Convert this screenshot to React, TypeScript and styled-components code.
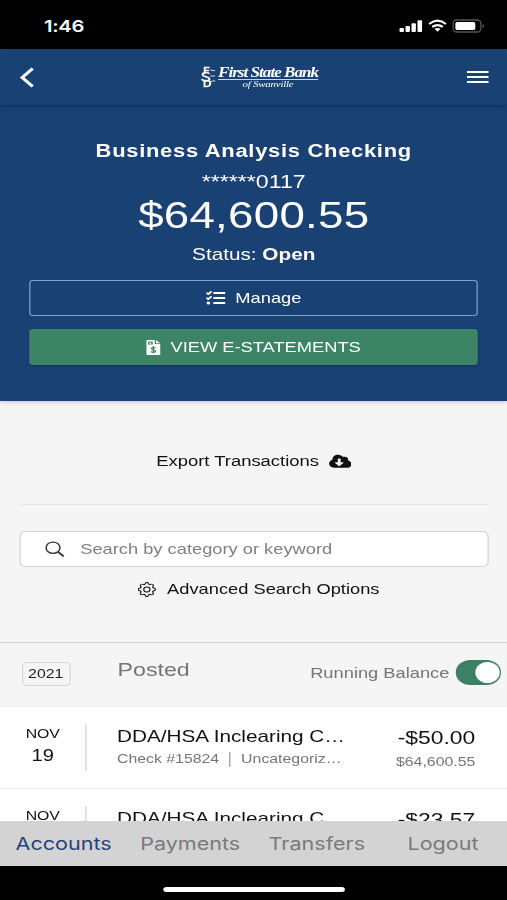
import React from "react";
import styled, { createGlobalStyle } from "styled-components";
import { FaTasks, FaCloudDownloadAlt } from "react-icons/fa";
import { BsGear } from "react-icons/bs";

const Global = createGlobalStyle`
  * { box-sizing: border-box; }
  body { margin: 0; background: #000; font-family: "Liberation Sans", Arial, sans-serif; }
`;

const Viewport = styled.div`
  width: 507px;
  height: 900px;
  overflow: hidden;
`;

/* The screen is laid out 416px wide and stretched to fill the viewport. */
const Screen = styled.div`
  width: 416px;
  height: 900px;
  display: flex;
  flex-direction: column;
  background: #f5f5f5;
  transform: scaleX(1.21875);
  transform-origin: 0 0;
`;

const Text = styled.span<{ $size: number; $ls?: number; $bold?: boolean; $color?: string; $lh?: number }>`
  display: block;
  white-space: nowrap;
  font-size: ${(p) => p.$size}px;
  line-height: ${(p) => p.$lh ?? 20}px;
  letter-spacing: ${(p) => p.$ls ?? 0}px;
  font-weight: ${(p) => (p.$bold ? 700 : 400)};
  color: ${(p) => p.$color ?? "inherit"};
`;

const StatusBar = styled.div`
  flex: none;
  height: 49px;
  padding: 2px 17.2px 0 36px;
  display: flex;
  align-items: center;
  justify-content: space-between;
  background: #000;
  color: #fff;
`;

const Clock = styled.span`
  font: 600 16.5px/20px Inter, sans-serif;
  letter-spacing: -0.2px;
`;

const Header = styled.header`
  flex: none;
  position: relative;
  height: 56px;
  padding: 0 15px 0 16.3px;
  display: flex;
  align-items: center;
  justify-content: space-between;
  background: #1a4173;
  color: #fff;
  box-shadow: 0 1px 4px rgba(0, 15, 50, 0.4);
`;

const Brand = styled.div`
  display: flex;
  align-items: center;
  gap: 2px;
  margin-left: 13.5px;
`;

const BrandWords = styled.div`
  width: 82px;
  padding-top: 1px;
  font-family: "Liberation Serif", serif;
  font-style: italic;
  font-weight: 700;
  text-align: center;
`;

const BrandName = styled.div`
  font-size: 14px;
  line-height: 13px;
  height: 14px;
  letter-spacing: -0.8px;
  white-space: nowrap;
  border-bottom: 1px solid #c9d6e8;
`;

const BrandPlace = styled.div`
  font-size: 9px;
  line-height: 9px;
  height: 9px;
  font-weight: 400;
  letter-spacing: -0.2px;
`;

const Account = styled.section`
  flex: none;
  height: 296px;
  padding: 34px 24px 0 24.4px;
  display: flex;
  flex-direction: column;
  align-items: center;
  background: #1a4173;
  color: #fff;
  box-shadow: 0 1px 4px rgba(0, 0, 0, 0.2);
`;

const Button = styled.button<{ $filled?: boolean }>`
  flex: none;
  width: 100%;
  height: 36px;
  margin: 0 0 13px;
  padding: 0;
  display: flex;
  align-items: center;
  justify-content: center;
  gap: 8px;
  border: 1px solid ${(p) => (p.$filled ? "#3d8467" : "#7da3c4")};
  border-radius: 3px;
  background: ${(p) => (p.$filled ? "#3d8467" : "transparent")};
  color: #fff;
  font-family: inherit;
  box-shadow: ${(p) => (p.$filled ? "0 1px 2px rgba(0, 0, 0, 0.25)" : "none")};
`;

const Buttons = styled.div`
  width: 100%;
`;

const Tools = styled.section`
  flex: none;
  height: 241px;
  padding: 49px 15.4px 0 15.8px;
  color: #111;
`;

const Action = styled.div<{ $gap: number; $shift?: number }>`
  display: flex;
  align-items: center;
  justify-content: center;
  gap: ${(p) => p.$gap}px;
  padding-left: ${(p) => p.$shift ?? 0}px;
`;

const Rule = styled.hr`
  margin: 32px 0 26px;
  border: 0;
  border-top: 1px solid #e8e8e8;
`;

const SearchBox = styled.div`
  height: 36px;
  margin-bottom: 11px;
  padding-left: 20.5px;
  display: flex;
  align-items: center;
  gap: 12.5px;
  border: 1px solid #d3d3d3;
  border-radius: 5px;
  background: #fff;
  color: #333;
`;

const ListHead = styled.div`
  flex: none;
  height: 65px;
  padding-left: 17.5px;
  display: flex;
  align-items: flex-start;
  border-top: 1px solid #d3d3d3;
  border-bottom: 1px solid #eee;
`;

const Year = styled.div`
  width: 40px;
  height: 24px;
  margin: 19px 39px 0 0;
  display: flex;
  align-items: center;
  justify-content: center;
  border: 1px solid #d6d6d6;
  border-radius: 4px;
  color: #222;
`;

const Posted = styled.div`
  width: 158px;
  padding-top: 15px;
`;

const Balance = styled.div`
  padding-top: 17px;
  display: flex;
  align-items: center;
  gap: 5px;
`;

const Toggle = styled.div`
  width: 37.5px;
  height: 25px;
  padding: 2px 1.5px;
  display: flex;
  justify-content: flex-end;
  border-radius: 12px;
  background: #3b8264;
`;

const Knob = styled.div`
  width: 20px;
  height: 21px;
  border-radius: 50%;
  background: #fff;
`;

const List = styled.div`
  flex: none;
  height: 114px;
  overflow: hidden;
  background: #fff;
`;

const Row = styled.div`
  height: 82px;
  padding: 17px 26px 0 0;
  display: flex;
  align-items: flex-start;
  border-bottom: 1px solid #e6e6e6;
  color: #111;
`;

const DateCell = styled.div`
  width: 71px;
  height: 47px;
  flex: none;
  display: flex;
  flex-direction: column;
  align-items: center;
  border-right: 1.5px solid #d2d2d2;
`;

const Details = styled.div`
  flex: 1;
  padding: 3px 0 0 25px;
`;

const Meta = styled.div`
  display: flex;
  align-items: center;
  gap: 8.5px;
  color: #757575;
`;

const Bar = styled.span`
  width: 1px;
  height: 15px;
  background: #999;
`;

const Amount = styled.div`
  display: flex;
  flex-direction: column;
  align-items: flex-end;
  padding-top: 2px;
`;

const Nav = styled.nav`
  flex: none;
  height: 45px;
  padding-left: 12.8px;
  display: flex;
  align-items: center;
  gap: 23.3px;
  background: #d3d3d3;
`;

const NavItem = styled.a<{ $active?: boolean; $last?: boolean }>`
  font: 400 17.7px/24px Inter, sans-serif;
  color: ${(p) => (p.$active ? "#1f4478" : "#7a7a7a")};
  margin-left: ${(p) => (p.$last ? 11.5 : 0)}px;
`;

const HomeArea = styled.div`
  flex: 1;
  display: flex;
  justify-content: center;
  padding-top: 21px;
  background: #000;
`;

const HomeIndicator = styled.div`
  width: 149px;
  height: 5px;
  border-radius: 3px;
  background: #fff;
`;

const StatusIcons = () => (
  <svg width="72" height="16" viewBox="0 0 88 16" preserveAspectRatio="none">
    <g fill="#fff">
      <rect x="1" y="10" width="4.4" height="4" rx="1" />
      <rect x="7" y="8" width="4.4" height="6" rx="1" />
      <rect x="13" y="5.3" width="4.4" height="8.7" rx="1" />
      <rect x="19" y="2.3" width="4.6" height="11.7" rx="1" />
      <path d="M36 10.8 Q39.1 9 42.2 10.8 L39.1 13.8Z" />
      <rect x="57" y="4" width="20" height="8" rx="1.7" />
    </g>
    <path d="M30.7 6 Q39.1 -0.6 47.5 6 M33.8 8.9 Q39.1 5.2 44.4 8.9" fill="none" stroke="#fff" strokeWidth="2.2" />
    <rect x="54.8" y="2" width="27.8" height="12" rx="3.5" fill="none" stroke="#555" strokeWidth="1.3" />
    <path d="M84.4 6 q2.6 2 0 4z" fill="#777" />
  </svg>
);

const BackIcon = () => (
  <svg width="13" height="21" viewBox="0 0 13 21" fill="none" stroke="#fff" strokeWidth="2.7">
    <path d="M10.8 1.5 2.2 10.5l8.6 9" />
  </svg>
);

const MenuIcon = () => (
  <svg width="18" height="14" viewBox="0 0 18 14" stroke="#fff" strokeWidth="1.9">
    <path d="M0 2h18M0 7h18M0 12h18" />
  </svg>
);

const StatementIcon = () => (
  <svg width="11.5" height="15" viewBox="0 0 11.5 15">
    <path
      fill="#fff"
      fillRule="evenodd"
      d="M.8 0H7v4h4.5v10.3q0 .7-.8.7H.8Q0 15 0 14.3V.8Q0 0 .8 0ZM1.5 1.6v3h3.8v-3ZM8 0l3.5 3.2H8Z"
    />
    <path fill="#fff" d="M2.5 2.5h1.6v1.2H2.5z" />
    <path fill="none" stroke="#3d8467" strokeWidth="1.1" d="M7.7 8C6.3 7 4 7.5 4.2 8.7S7.8 9.9 7.6 11.3 5 12.6 3.9 11.5M5.9 6.3v7" />
  </svg>
);

const LensIcon = () => (
  <svg width="16" height="16" viewBox="0 0 16 16" fill="none" stroke="currentColor" strokeWidth="1.25">
    <circle cx="6.5" cy="6.7" r="5.7" />
    <path d="M10.6 10.9 15.3 15.4" strokeWidth="1.7" />
  </svg>
);

const BrandMark = () => (
  <svg width="12" height="22" viewBox="0 0 12 22" fill="none" stroke="#fff" strokeWidth="1.6">
    <path d="M7 1.5H3V8M3 4.5H6.5M6.8 7.8C5 5.5 1 6.5 1.3 8.8S7 10.6 6.8 13.2 1.5 15.6.6 13M2.8 14.5v6h1.5c4.2 0 4.2-6 0-6H1" />
    <path d="M7.5 4l4 .7M7.5 10h4M7.5 15.5l4.2-.7" strokeWidth="1" opacity=".8" />
  </svg>
);

type TransactionProps = {
  day?: string;
  amount: string;
  balance?: string;
  check?: string;
  category?: string;
};

const Transaction = ({ day, amount, balance, check, category }: TransactionProps) => (
  <Row>
    <DateCell>
      <Text $size={13} $ls={-0.1} $lh={20}>NOV</Text>
      {day && <Text $size={16.5} $lh={23}>{day}</Text>}
    </DateCell>
    <Details>
      <Text $size={17} $lh={20}>DDA/HSA Inclearing C…</Text>
      {check && (
        <Meta>
          <Text $size={13} $lh={24}>{check}</Text>
          <Bar />
          <Text $size={13} $lh={24}>{category}</Text>
        </Meta>
      )}
    </Details>
    <Amount>
      <Text $size={18.8} $lh={23}>{amount}</Text>
      {balance && <Text $size={13} $lh={25} $color="#757575">{balance}</Text>}
    </Amount>
  </Row>
);

export default function App() {
  return (
    <Viewport>
      <Global />
      <Screen>
        <StatusBar>
          <Clock>1:46</Clock>
          <StatusIcons />
        </StatusBar>
        <Header>
          <BackIcon />
          <Brand>
            <BrandMark />
            <BrandWords>
              <BrandName>First State Bank</BrandName>
              <BrandPlace>of Swanville</BrandPlace>
            </BrandWords>
          </Brand>
          <MenuIcon />
        </Header>
        <Account>
          <Text $size={18} $ls={0.58} $bold $lh={24}>Business Analysis Checking</Text>
          <Text $size={19} $lh={38}>******0117</Text>
          <Text $size={37.5} $ls={0.2} $lh={29}>$64,600.55</Text>
          <Text $size={17} $lh={50}>Status: <b>Open</b></Text>
          <Buttons>
            <Button>
              <FaTasks size={16} />
              <Text $size={15}>Manage</Text>
            </Button>
            <Button $filled>
              <StatementIcon />
              <Text $size={15}>VIEW E-STATEMENTS</Text>
            </Button>
          </Buttons>
        </Account>
        <Tools>
          <Action $gap={8}>
            <Text $size={15.1} $lh={22}>Export Transactions</Text>
            <FaCloudDownloadAlt size={18.5} />
          </Action>
          <Rule />
          <SearchBox>
            <LensIcon />
            <Text $size={15} $color="#808080">Search by category or keyword</Text>
          </SearchBox>
          <Action $gap={9} $shift={8}>
            <BsGear size={15} />
            <Text $size={15} $lh={22}>Advanced Search Options</Text>
          </Action>
        </Tools>
        <ListHead>
          <Year><Text $size={13}>2021</Text></Year>
          <Posted><Text $size={19} $lh={24} $color="#757575">Posted</Text></Posted>
          <Balance>
            <Text $size={15} $color="#757575">Running Balance</Text>
            <Toggle><Knob /></Toggle>
          </Balance>
        </ListHead>
        <List>
          <Transaction day="19" amount="-$50.00" balance="$64,600.55" check="Check #15824" category="Uncategoriz…" />
          <Transaction amount="-$23.57" />
        </List>
        <Nav>
          <NavItem $active>Accounts</NavItem>
          <NavItem>Payments</NavItem>
          <NavItem>Transfers</NavItem>
          <NavItem $last>Logout</NavItem>
        </Nav>
        <HomeArea>
          <HomeIndicator />
        </HomeArea>
      </Screen>
    </Viewport>
  );
}
